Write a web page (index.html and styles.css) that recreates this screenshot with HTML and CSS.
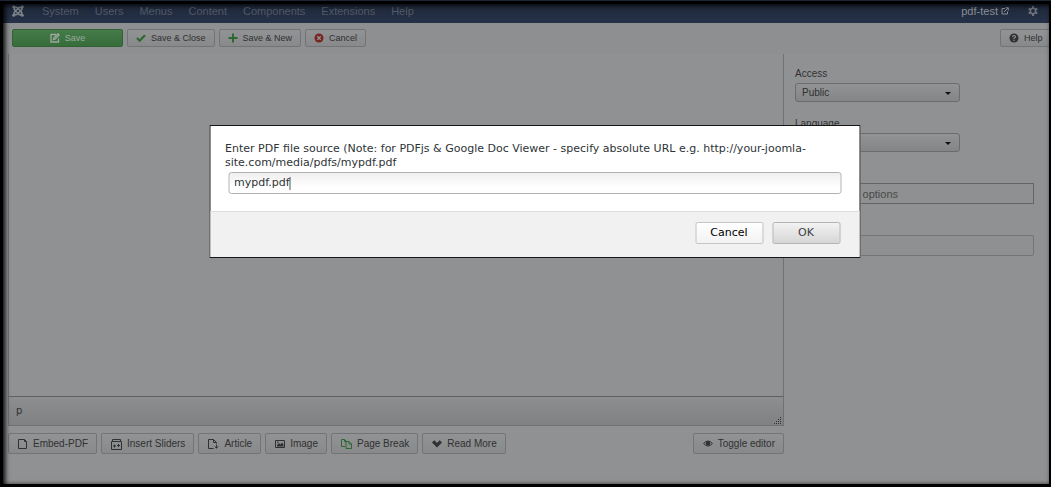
FILE: index.html
```
<!DOCTYPE html>
<html lang="en">
<head>
    <meta charset="UTF-8">
    <meta name="viewport" content="width=device-width, initial-scale=1.0">
    <title>Articles: Edit</title>
    <link rel="stylesheet" href="styles.css">
</head>
<body>

<!-- Top menu -->
<header class="navbar">
    <a class="brand" href="#" aria-label="Home">
        <svg width="12" height="12" viewBox="0 0 12 12" fill="none" stroke="currentColor" stroke-width="1.600"><path d="M2 10V8.500Q2 7.500 3 6.500L6.500 3Q8 1.500 9.500 3M10 2V3.500Q10 4.500 9 5.500L5.500 9Q4 10.500 2.500 9M2 2H3.500Q4.500 2 5.500 3L9 6.500Q10.500 8 9 9.500M10 10H8.500Q7.500 10 6.500 9L3 5.500Q1.500 4 3 2.500"/><g fill="currentColor" stroke="none"><circle cx="1.700" cy="1.700" r="1.500"/><circle cx="10.300" cy="1.700" r="1.500"/><circle cx="1.700" cy="10.300" r="1.500"/><circle cx="10.300" cy="10.300" r="1.500"/></g></svg>
    </a>
    <nav>
        <ul>
            <li><a href="#">System</a></li>
            <li><a href="#">Users</a></li>
            <li><a href="#">Menus</a></li>
            <li><a href="#">Content</a></li>
            <li><a href="#">Components</a></li>
            <li><a href="#">Extensions</a></li>
            <li><a href="#">Help</a></li>
        </ul>
    </nav>
    <a class="site-link" href="#">pdf-test
        <svg width="8" height="8" viewBox="0 0 8 8" fill="none" stroke="currentColor"><path d="M4 1.500H1V7H6.500V4.500M3 5L7 1M4.500 .7H7.300V3.500"/></svg>
    </a>
    <a class="settings" href="#" aria-label="Settings">
        <svg width="10" height="10" viewBox="0 0 10 10" fill="none" stroke="currentColor"><circle cx="5" cy="5" r="2.700" stroke-width="1.600"/><path d="M5 0V2M5 8V10M.7 2.500L2.400 3.500M7.600 6.500L9.300 7.500M.7 7.500L2.400 6.500M7.600 3.500L9.300 2.500" stroke-width="2"/></svg>
    </a>
</header>

<!-- Toolbar -->
<div class="toolbar">
    <button class="btn btn-save"><svg width="10" height="10" viewBox="0 0 10 10" fill="none" stroke="currentColor" stroke-width="1.300"><path d="M6 1.500H1V9H8.500V5.500M3.500 6.500L4 4.800L8 .8L9.200 2L5.200 6Z"/></svg>Save</button>
    <button class="btn"><svg class="green" width="10" height="10" viewBox="0 0 10 10" fill="none" stroke="currentColor" stroke-width="2.200"><path d="M1 5L3.700 7.700L9 2.300"/></svg>Save &amp; Close</button>
    <button class="btn"><svg class="green" width="10" height="10" viewBox="0 0 10 10" fill="none" stroke="currentColor" stroke-width="2"><path d="M5 .5V9.500M.5 5H9.500"/></svg>Save &amp; New</button>
    <button class="btn"><svg class="red" width="10" height="10" viewBox="0 0 10 10"><circle cx="5" cy="5" r="4.500" fill="currentColor"/><path d="M3.300 3.300L6.700 6.700M6.700 3.300L3.300 6.700" stroke="#929292" stroke-width="1.300"/></svg>Cancel</button>
    <button class="btn btn-help"><svg width="10" height="10" viewBox="0 0 10 10"><circle cx="5" cy="5" r="4.500" fill="currentColor"/><path d="M3.500 3.800Q3.700 2.500 5 2.500T6.500 3.800Q6.500 4.600 5 5.300V6M5 6.800V8" fill="none" stroke="#929292" stroke-width="1.200"/></svg>Help</button>
</div>

<!-- Article form -->
<main class="form">
    <section class="editor-column">
        <div class="editor">
            <div class="editor-body"></div>
            <div class="editor-status">
                <span>p</span>
                <svg width="8" height="8" viewBox="0 0 8 8" fill="currentColor"><path d="M6 0H7V1H6ZM4 2H5V3H4ZM6 2H7V3H6ZM2 4H3V5H2ZM4 4H5V5H4ZM6 4H7V5H6ZM0 6H1V7H0ZM2 6H3V7H2ZM4 6H5V7H4ZM6 6H7V7H6Z"/></svg>
            </div>
        </div>
        <div class="editor-buttons">
            <button class="btn"><svg width="10" height="10" viewBox="0 0 10 10" fill="none" stroke="currentColor"><path d="M.5 .5H6.500L8.500 2.500V9.500H.5ZM6.500 .5V2.500H8.500"/></svg>Embed-PDF</button>
            <button class="btn"><svg width="11" height="12" viewBox="0 0 11 12" fill="none" stroke="currentColor"><path d="M1.500 3V1.500H9.500V3M.5 3.500H10.500V11.500H.5Z"/><path d="M2 8H5M3.500 6.500V9.500M6 7.500H9M7.500 6V9"/></svg>Insert Sliders</button>
            <button class="btn"><svg width="11" height="10" viewBox="0 0 11 10" fill="none" stroke="currentColor"><path d="M5.500 9.500H.5V.5H5.500L8.500 3.500V4.500M5.500 .5V3.500H8.500"/><path d="M8.500 5.500V9M6.800 7.500L8.500 9.200L10.200 7.500"/></svg>Article</button>
            <button class="btn"><svg width="10" height="10" viewBox="0 0 10 10"><path d="M.5 1.500H9.500V8.500H.5Z" fill="none" stroke="currentColor"/><path d="M2 7.500V6L4 4L5.500 5.500L7 3.500L8.500 5.500V7.500Z" fill="currentColor"/><circle cx="2.800" cy="3.300" r=".8" fill="currentColor"/></svg>Image</button>
            <button class="btn"><svg class="green" width="11" height="10" viewBox="0 0 11 10" fill="none" stroke="currentColor"><path d="M4 7.500H.5V.5H3.500L5.500 2.500M3.500 .5V2.500H5.500M5 2.500H8L10.500 5V9.500H5ZM8 2.500V5H10.500"/></svg>Page Break</button>
            <button class="btn"><svg width="10" height="10" viewBox="0 0 10 10" fill="currentColor"><path d="M0 3.500L2.300 1.200L5 3.900L7.700 1.200L10 3.500L5 8.500Z"/></svg>Read More</button>
            <button class="btn btn-toggle"><svg width="10" height="10" viewBox="0 0 10 10"><path d="M.5 4.500Q5 -.5 9.500 4.500Q5 9.500 .5 4.500Z" fill="none" stroke="currentColor"/><circle cx="5" cy="4.200" r="2.200" fill="currentColor"/></svg>Toggle editor</button>
        </div>
    </section>

    <aside class="sidebar">
        <div class="field">
            <label for="access">Access</label>
            <div class="select"><select id="access"><option>Public</option></select></div>
        </div>
        <div class="field">
            <label for="language">Language</label>
            <div class="select"><select id="language"><option>All</option></select></div>
        </div>
        <div class="field">
            <label for="tags">Tags</label>
            <input class="tags" id="tags" type="text" placeholder="Select some options">
        </div>
        <div class="field field-plain">
            <input type="text" aria-label="Version Note">
        </div>
    </aside>
</main>

<!-- Prompt -->
<div class="prompt" role="dialog" aria-modal="true">
    <div class="prompt-body">
        <label for="source">Enter PDF file source (Note: for PDFjs &amp; Google Doc Viewer - specify absolute URL e.g. http://your-joomla-site.com/media/pdfs/mypdf.pdf</label>
        <input id="source" type="text" value="mypdf.pdf">
    </div>
    <div class="prompt-footer">
        <button class="prompt-cancel">Cancel</button>
        <button class="prompt-ok">OK</button>
    </div>
</div>

<div class="frame"></div>

</body>
</html>
```
FILE: styles.css
```
* {
    margin: 0;
    padding: 0;
    box-sizing: border-box;
}

body {
    display: flex;
    flex-direction: column;
    height: 100vh;
    overflow: hidden;
    background: #909192;
    color: #303132;
    font: 10px/14px "Liberation Sans", Arial, sans-serif;
}

button, input, select {
    font: inherit;
    color: inherit;
}

svg {
    flex: none;
}

a {
    color: inherit;
    text-decoration: none;
}

/* Top menu */
.navbar {
    display: flex;
    align-items: center;
    height: 23px;
    padding: 0 13px 2px 12px;
    background: linear-gradient(#1b2534, #263249);
    color: #515966;
    font-size: 11px;
}

.brand {
    display: flex;
    margin-right: 18px;
    color: #7d8289;
}

.navbar ul {
    display: flex;
    gap: 16px;
    list-style: none;
}

.site-link {
    margin-left: auto;
    color: #8b8f96;
}

.settings {
    display: flex;
    margin-left: 19px;
    color: #6d737c;
}

/* Toolbar */
.toolbar {
    display: flex;
    gap: 4px;
    height: 31px;
    padding: 6px 0 0 12px;
    background: #8e8f90;
}

.btn {
    display: flex;
    align-items: center;
    gap: 5px;
    height: 21px;
    padding: 0 8px 0 9px;
    border: 1px solid #737475;
    border-radius: 2px;
    background: linear-gradient(#929394, #88898a);
    white-space: nowrap;
}

.toolbar .btn {
    height: 18px;
    padding: 0 8px;
    font-size: 9px;
}

.toolbar .btn-save {
    justify-content: center;
    width: 111px;
    border-color: #326135;
    background: linear-gradient(#447b49, #366d3b);
    color: #9fa9a0;
}

.toolbar .btn-help {
    width: 56px;
    margin-left: auto;
    margin-right: -5px;
}

.green {
    color: #2b6931;
}

.red {
    color: #782522;
}

/* Article form */
.form {
    display: flex;
    flex: 1;
    gap: 11px;
    padding: 0 17px 33px 8px;
}

.editor-column {
    display: flex;
    flex: 1;
    flex-direction: column;
    gap: 7px;
}

.editor {
    display: flex;
    flex: 1;
    flex-direction: column;
    border: 1px solid #707172;
    border-width: 0 1px 1px;
}

.editor-body {
    flex: 1;
}

.editor-status {
    display: flex;
    justify-content: space-between;
    align-items: center;
    height: 29px;
    padding: 0 1px 0 7px;
    border-top: 1px solid #5f6061;
    background: linear-gradient(#8d8e8f, #808182);
    font-family: "DejaVu Sans", sans-serif;
}

.editor-status svg {
    align-self: flex-end;
}

.editor-buttons {
    display: flex;
    gap: 4px;
}

.btn-toggle {
    margin-left: auto;
}

/* Sidebar */
.sidebar {
    width: 239px;
    padding-top: 13px;
}

.field {
    margin-bottom: 15px;
}

.field-plain {
    padding-top: 16px;
}

.field label {
    display: block;
    margin-bottom: 2px;
}

.select {
    position: relative;
    width: 165px;
}

.select::after {
    content: "";
    position: absolute;
    top: 9px;
    right: 9px;
    border: 3px solid transparent;
    border-top-color: #111;
    border-bottom: 0;
    pointer-events: none;
}

.select select {
    display: block;
    appearance: none;
    width: 100%;
    height: 19px;
    padding: 0 6px;
    border: 1px solid #6b6c6d;
    border-radius: 3px;
    background: linear-gradient(#929394, #848586);
}

.field input {
    display: block;
    width: 100%;
    height: 21px;
    padding: 0 3px;
    border: 1px solid #737475;
    border-radius: 2px;
    background: #8f9091;
}

.field .tags {
    border-color: #636465;
    border-radius: 0;
    font-size: 11px;
}

.field input::placeholder {
    color: #484949;
}

/* Prompt */
.prompt {
    position: fixed;
    top: 125px;
    left: calc(50% + 9px);
    width: 651px;
    transform: translateX(-50%);
    border: 1px solid #161616;
    background: #fff;
    color: #2e3436;
    font: 11px/14px "DejaVu Sans", sans-serif;
}

.prompt-body {
    padding: 16px 16px 17px 15px;
}

.prompt-body label {
    display: block;
}

/* The first background layer is the text caret */
.prompt-body input {
    display: block;
    width: 613px;
    height: 22px;
    margin: 2px 0 0 3px;
    padding: 0 5px 1px;
    border: 1px solid #b0b3b1;
    border-radius: 3px;
    outline: none;
    background: linear-gradient(#555, #555) 60px 4px / 1px 13px no-repeat, linear-gradient(#efefef, #fff 70%);
}

.prompt-footer {
    display: flex;
    justify-content: flex-end;
    gap: 9px;
    padding: 10px 19px 13px;
    border-top: 1px solid #dedede;
    background: #f1f1f1;
}

.prompt-footer button {
    width: 68px;
    height: 22px;
    border: 1px solid #c4c4c4;
    border-radius: 2px;
    background: linear-gradient(#fff, #f2f2f2);
    color: #000;
}

.prompt-footer .prompt-ok {
    border-color: #b4b4b4;
    background: linear-gradient(#f2f2f2, #d6d6d6);
    color: #3c4143;
}

/* Dark edge round the window */
.frame {
    position: fixed;
    inset: 1px -1px 0 0;
    border: 3px solid #000;
    box-shadow: inset 2px 1px 5px #000;
    pointer-events: none;
}
```
